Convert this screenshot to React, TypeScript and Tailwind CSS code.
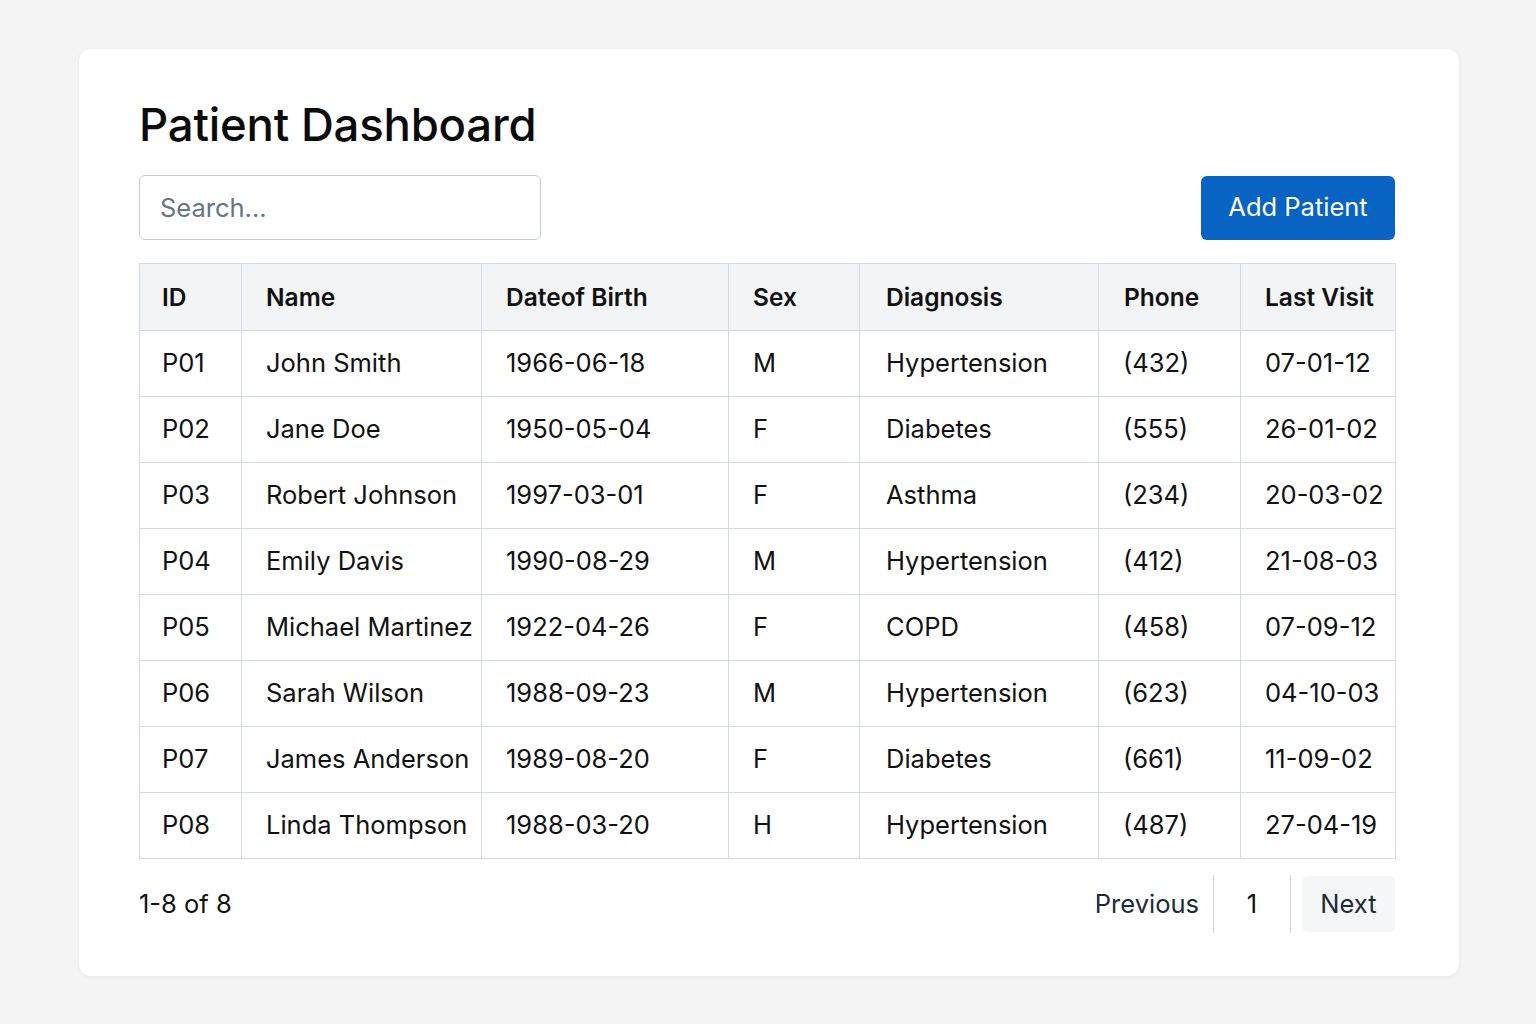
const patients = [
  { id: "P01", name: "John Smith", dob: "1966-06-18", sex: "M", diagnosis: "Hypertension", phone: "(432)", lastVisit: "07-01-12" },
  { id: "P02", name: "Jane Doe", dob: "1950-05-04", sex: "F", diagnosis: "Diabetes", phone: "(555)", lastVisit: "26-01-02" },
  { id: "P03", name: "Robert Johnson", dob: "1997-03-01", sex: "F", diagnosis: "Asthma", phone: "(234)", lastVisit: "20-03-02" },
  { id: "P04", name: "Emily Davis", dob: "1990-08-29", sex: "M", diagnosis: "Hypertension", phone: "(412)", lastVisit: "21-08-03" },
  { id: "P05", name: "Michael Martinez", dob: "1922-04-26", sex: "F", diagnosis: "COPD", phone: "(458)", lastVisit: "07-09-12" },
  { id: "P06", name: "Sarah Wilson", dob: "1988-09-23", sex: "M", diagnosis: "Hypertension", phone: "(623)", lastVisit: "04-10-03" },
  { id: "P07", name: "James Anderson", dob: "1989-08-20", sex: "F", diagnosis: "Diabetes", phone: "(661)", lastVisit: "11-09-02" },
  { id: "P08", name: "Linda Thompson", dob: "1988-03-20", sex: "H", diagnosis: "Hypertension", phone: "(487)", lastVisit: "27-04-19" },
];

const columns = [
  { label: "ID", width: "w-[102px]", pad: "pl-[22px]" },
  { label: "Name", width: "w-[240px]", pad: "pl-[24px]" },
  { label: "Dateof Birth", width: "w-[247px]", pad: "pl-[24px]" },
  { label: "Sex", width: "w-[131px]", pad: "pl-[24px]" },
  { label: "Diagnosis", width: "w-[239px]", pad: "pl-[26px]" },
  { label: "Phone", width: "w-[142px]", pad: "pl-[25px]" },
  { label: "Last Visit", width: "w-[155px]", pad: "pl-[24px]" },
];

export default function App() {
  return (
    <div className="min-h-screen bg-[#f4f4f5] pt-[49px] pb-12 font-['Inter','Noto_Sans',sans-serif] text-[#111]">
      <div className="ml-[79px] w-[1380px] h-[927px] bg-white rounded-xl shadow-[0_1px_4px_rgba(0,0,0,0.06)] pl-[60px] pr-[64px] pt-[46px]">
        {/* header */}
        <h1 className="text-[45.5px] leading-[60px] font-medium tracking-[-0.2px] text-[#0b0b0b]">Patient Dashboard</h1>

        <div className="mt-[20px] flex items-center justify-between">
          <input
            type="text"
            placeholder="Search..."
            className="w-[402px] h-[65px] rounded-md border border-[#c3ccd8] px-5 text-[25.5px] placeholder:text-[#64748b] outline-none"
          />
          <button className="w-[194px] h-[64px] rounded-md bg-[#0863c3] text-white text-[25.5px] font-normal">
            Add Patient
          </button>
        </div>

        {/* table */}
        <table className="mt-[23px] w-[1256px] border-collapse table-fixed text-[25.5px]">
          <thead>
            <tr className="h-[67px] bg-[#f3f4f6]">
              {columns.map((c) => (
                <th key={c.label} className={`${c.width} ${c.pad} border border-[#d3dae5] text-left font-semibold text-[24.5px] whitespace-nowrap`}>
                  {c.label}
                </th>
              ))}
            </tr>
          </thead>
          <tbody>
            {patients.map((p) => (
              <tr key={p.id} className="h-[66px]">
                <td className="border border-[#d3dae5] pl-[22px] whitespace-nowrap">{p.id}</td>
                <td className="border border-[#d3dae5] pl-[24px] whitespace-nowrap">{p.name}</td>
                <td className="border border-[#d3dae5] pl-[24px] whitespace-nowrap">{p.dob}</td>
                <td className="border border-[#d3dae5] pl-[24px] whitespace-nowrap">{p.sex}</td>
                <td className="border border-[#d3dae5] pl-[26px] whitespace-nowrap">{p.diagnosis}</td>
                <td className="border border-[#d3dae5] pl-[24px] whitespace-nowrap">{p.phone}</td>
                <td className="border border-[#d3dae5] pl-[24px] whitespace-nowrap">{p.lastVisit}</td>
              </tr>
            ))}
          </tbody>
        </table>

        {/* footer */}
        <div className="mt-[16px] flex items-center justify-between">
          <span className="text-[25.5px]">1-8 of 8</span>
          <div className="flex items-center text-[25.5px] text-[#1b2b3c]">
            <span className="pr-[14px]">Previous</span>
            <span className="w-px h-[58px] bg-[#cfd6e0]" />
            <span className="w-[76px] text-center text-[#111]">1</span>
            <span className="w-px h-[58px] bg-[#cfd6e0]" />
            <button className="ml-[11px] w-[93px] h-[56px] rounded-md bg-[#f5f6f7]">Next</button>
          </div>
        </div>
      </div>
    </div>
  );
}
